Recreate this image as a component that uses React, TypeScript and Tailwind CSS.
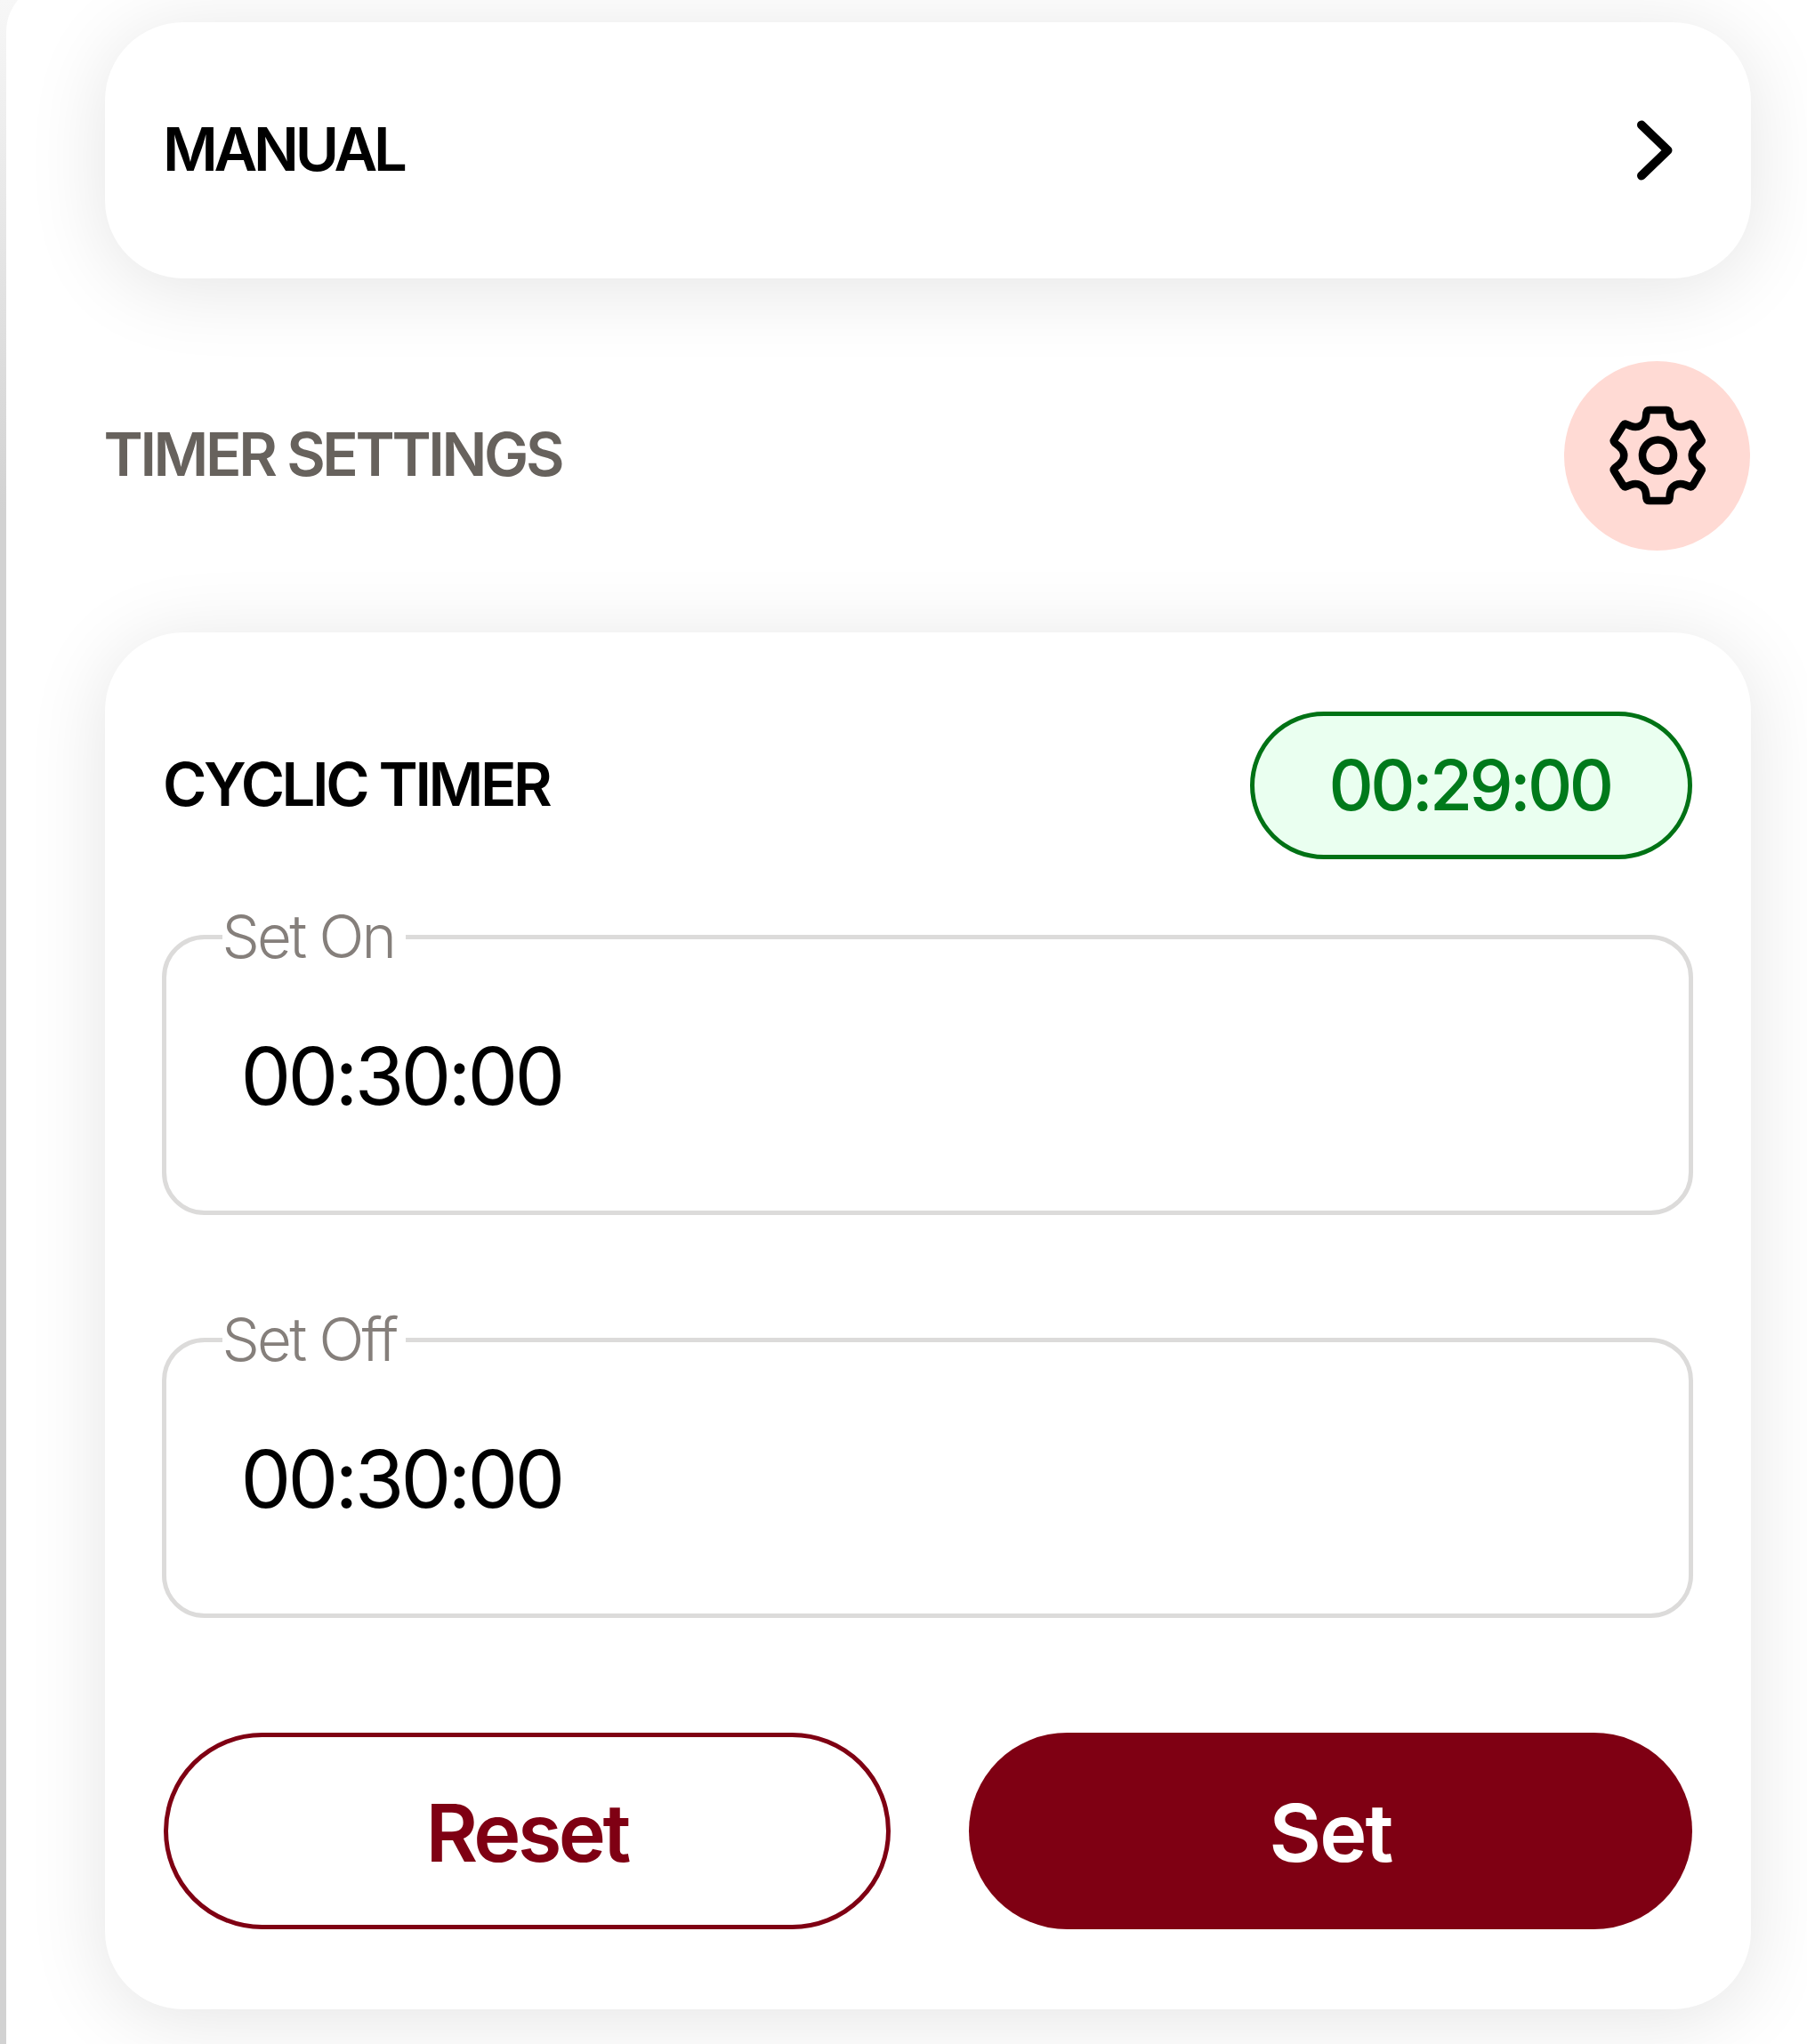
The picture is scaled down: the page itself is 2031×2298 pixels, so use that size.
function ChevronIcon() {
  return (
    <svg className="mr-[85px] h-[68px] w-[44px]" viewBox="0 0 44 68" fill="none" stroke="#000" strokeWidth="10" strokeLinecap="round" strokeLinejoin="round">
      <path d="M6 5.500 L35.500 34 L6 62.500" />
    </svg>
  );
}

function GearIcon() {
  return (
    <svg className="h-[112px] w-[110px]" viewBox="0 0 110 112" fill="none" stroke="#000" strokeWidth="8.600" strokeLinejoin="round">
      <path d="M46 5 H65 Q68 5 68.500 8 L69 13 C70 22 78 26 86 23 L91 21 Q93 20 94.500 22 L104 38 Q105.500 40 103.500 42 L99 46 C92 52 92 60 99 66 L103.500 70 Q105.500 72 104 74 L94.500 90 Q93 92 91 91 L86 89 C78 86 70 90 69 99 L68.500 104 Q68 107 65 107 H46 Q43 107 42.500 104 L42 99 C41 90 33 86 25 89 L20 91 Q18 92 16.500 90 L6.500 74 Q5 72 7 70 L12 66 C19 60 19 52 12 46 L7 42 Q5 40 6.500 38 L16.500 22 Q18 20 20 21 L25 23 C33 26 41 22 42 13 L42.500 8 Q43 5 46 5 Z" />
      <circle cx="55.500" cy="56" r="17.500" />
    </svg>
  );
}

function TimeField({ label, value }: { label: string; value: string }) {
  return (
    <div className="relative flex h-[315px] items-center rounded-[48px] border-[5px] border-[#dcdbda] pt-[3px] pl-[84px]">
      <span className="absolute top-[-43px] left-[63px] w-[206px] bg-white text-[67px] leading-[80px] font-[350] tracking-[-0.041em] whitespace-nowrap text-[#857f7b]">
        {label}
      </span>
      <span className="text-[90px] leading-[108px] tracking-[-0.042em] text-black">{value}</span>
    </div>
  );
}

const cardShadow = "shadow-[0_10px_90px_rgba(0,0,0,0.11)]";

export default function App() {
  return (
    <div className="h-[2298px] w-[2031px] overflow-hidden bg-linear-to-b from-[#f7f7f7] via-[#d2d2d2] via-25% to-[#d2d2d2] pl-[7px] font-['Inter',sans-serif]">
      <main className="-mt-[20px] h-[2318px] rounded-tl-[56px] bg-white pt-[45px] pr-[63px] pl-[110.500px]">
        <section className={`flex h-[288px] items-center justify-between rounded-[88px] bg-white pl-[65.500px] ${cardShadow}`}>
          <h2 className="-mt-[3px] text-[67px] leading-[80px] font-semibold tracking-[-0.063em] text-black">MANUAL</h2>
          <ChevronIcon />
        </section>

        <div className="flex h-[398px] items-center justify-between">
          <h2 className="-ml-[1px] -mt-[2px] text-[67px] leading-[80px] font-[560] tracking-[-0.050em] text-[#67625d]">TIMER SETTINGS</h2>
          <div className="mr-[1px] flex h-[213px] w-[209px] items-center justify-center rounded-[50%] bg-[#ffdad4]">
            <GearIcon />
          </div>
        </div>

        <section className={`h-[1548px] rounded-[88px] bg-white pt-[89px] pr-[65px] pl-[64px] ${cardShadow}`}>
          <div className="flex items-center justify-between pl-[1.500px]">
            <h2 className="-mt-[3px] text-[67px] leading-[80px] font-semibold tracking-[-0.051em] text-black">CYCLIC TIMER</h2>
            <div className="mr-[1px] flex h-[166px] w-[497px] items-center justify-center rounded-full border-[5px] border-[#007215] bg-[#eafff0] pr-[3px] text-[78px] leading-[94px] font-medium tracking-[-0.046em] text-[#007a1b]">
              00:29:00
            </div>
          </div>

          <div className="mt-[85px] flex flex-col gap-[138px]">
            <TimeField label="Set On" value="00:30:00" />
            <TimeField label="Set Off" value="00:30:00" />
          </div>

          <div className="mt-[129px] flex justify-between pl-[2px]">
            <button className="h-[221px] w-[817px] rounded-full border-[5px] border-[#7f0013] pt-[3px] text-[90px] font-semibold tracking-[-0.040em] text-[#7f0013]">Reset</button>
            <button className="mr-[1px] h-[221px] w-[813px] rounded-full bg-[#7f0013] pt-[3px] text-[90px] font-semibold tracking-[-0.020em] text-white">Set</button>
          </div>
        </section>
      </main>
    </div>
  );
}
